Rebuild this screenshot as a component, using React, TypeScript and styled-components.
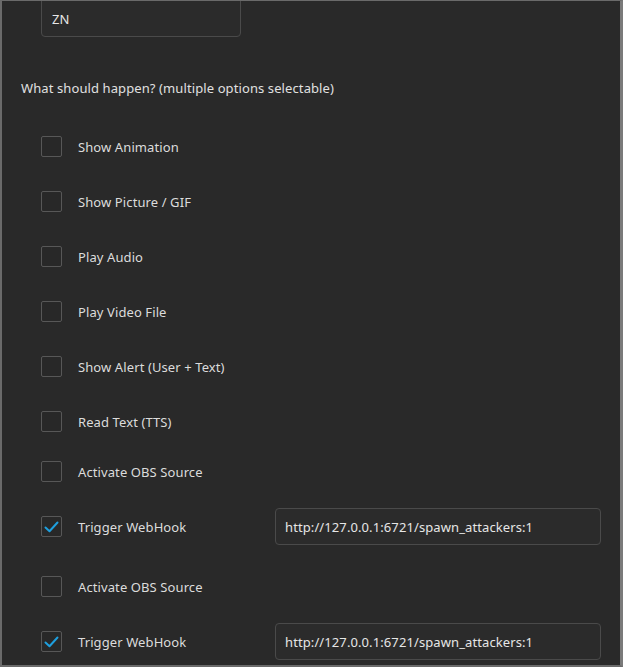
import React from "react";
import styled, { createGlobalStyle } from "styled-components";

const Global = createGlobalStyle`
  html, body { margin: 0; padding: 0; background: #2a2a2a; }
  * { box-sizing: border-box; }
`;

const Frame = styled.div`
  width: 623px;
  height: 667px;
  overflow: hidden;
  background: #292929;
  border-left: 2px solid #6a6a6a;
  border-right: 3px solid #7a7a7a;
  border-top: 1px solid #6a6a6a;
  border-bottom: 2px solid #6a6a6a;
  font-family: "Noto Sans", "Segoe UI", sans-serif;
  font-size: 13px;
  letter-spacing: 0.1px;
  color: #dedede;
`;

const Scroller = styled.div`
  margin-top: -4px;
  padding: 0 0 0 19px;
  display: flex;
  flex-direction: column;
`;

const NameInput = styled.div`
  margin-left: 20px;
  width: 200px;
  height: 40px;
  border: 1px solid #4a4a4a;
  border-radius: 4px;
  background: #2b2b2b;
  display: flex;
  align-items: center;
  padding: 4px 10px 0;
  color: #e6e6e6;
`;

const Heading = styled.div`
  margin-top: 42px;
  height: 18px;
  line-height: 18px;
  color: #e0e0e0;
`;

const Row = styled.div<{ $top: number; $h: number }>`
  margin-top: ${(p) => p.$top}px;
  height: ${(p) => p.$h}px;
  display: flex;
  align-items: center;
  padding-left: 20px;
`;

const Box = styled.div`
  width: 21px;
  height: 21px;
  border: 1px solid #575757;
  border-radius: 2px;
  background: #282828;
  display: flex;
  align-items: center;
  justify-content: center;
  flex: none;
`;

const Label = styled.span`
  margin-left: 16px;
  width: 197px;
  flex: none;
  color: #dcdcdc;
  white-space: nowrap;
`;

const UrlInput = styled.div`
  width: 326px;
  flex: none;
  height: 37px;
  border: 1px solid #4a4a4a;
  border-radius: 4px;
  background: #2b2b2b;
  display: flex;
  align-items: center;
  padding: 0 9px;
  color: #e6e6e6;
  white-space: nowrap;
`;

const Check = () => (
  <svg width="15" height="12" viewBox="0 0 15 12">
    <path d="M1.5 6.5 L5.5 10.2 L13.5 1.5" fill="none" stroke="#1e9fde" strokeWidth="2" strokeLinecap="round" strokeLinejoin="round" />
  </svg>
);

type Item = { label: string; top: number; h: number; checked?: boolean; url?: string };

const URL = "http://127.0.0.1:6721/spawn_attackers:1";

const items: Item[] = [
  { label: "Show Animation", top: 39, h: 21 },
  { label: "Show Picture / GIF", top: 34, h: 21 },
  { label: "Play Audio", top: 34, h: 21 },
  { label: "Play Video File", top: 34, h: 21 },
  { label: "Show Alert (User + Text)", top: 34, h: 21 },
  { label: "Read Text (TTS)", top: 34, h: 21 },
  { label: "Activate OBS Source", top: 29, h: 21 },
  { label: "Trigger WebHook", top: 26, h: 37, checked: true, url: URL },
  { label: "Activate OBS Source", top: 31, h: 21 },
  { label: "Trigger WebHook", top: 26, h: 37, checked: true, url: URL },
];

export default function App() {
  return (
    <>
      <Global />
      <Frame>
        <Scroller>
          <NameInput>ZN</NameInput>
          <Heading>What should happen? (multiple options selectable)</Heading>
          {items.map((it, i) => (
            <Row key={i} $top={it.top} $h={it.h}>
              <Box>{it.checked && <Check />}</Box>
              <Label>{it.label}</Label>
              {it.url && <UrlInput>{it.url}</UrlInput>}
            </Row>
          ))}
        </Scroller>
      </Frame>
    </>
  );
}
